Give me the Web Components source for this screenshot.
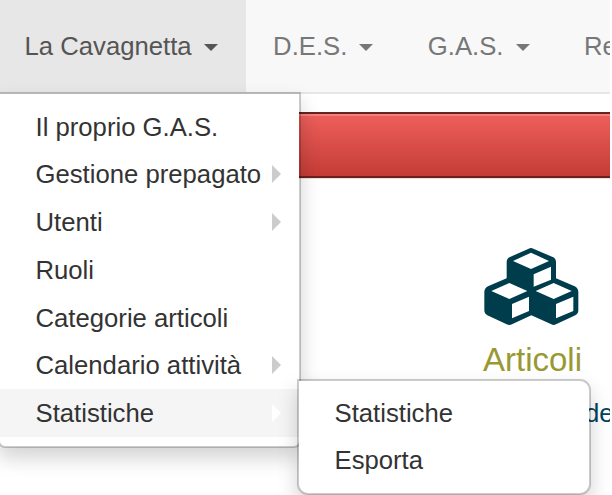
<!DOCTYPE html>
<html lang="it">
<head>
<meta charset="utf-8">
<title>La Cavagnetta</title>
<style>
html,body{margin:0;height:100%;overflow:hidden;background:#fff}
body{font:25.7px/47.75px "Liberation Sans",Arial,sans-serif;color:#333}
</style>
</head>
<body>
<app-page>
  <nav-bar slot="nav">
    <nav-item active caret>La Cavagnetta</nav-item>
    <nav-item caret>D.E.S.</nav-item>
    <nav-item caret>G.A.S.</nav-item>
    <nav-item>Re</nav-item>
  </nav-bar>
  <alert-bar></alert-bar>
  <feature-card heading="Articoli">de</feature-card>
  <drop-menu slot="menu">
    <menu-item>Il proprio G.A.S.</menu-item>
    <menu-item sub>Gestione prepagato</menu-item>
    <menu-item sub>Utenti</menu-item>
    <menu-item>Ruoli</menu-item>
    <menu-item>Categorie articoli</menu-item>
    <menu-item sub>Calendario attività</menu-item>
    <menu-item sub active>Statistiche</menu-item>
  </drop-menu>
  <drop-menu flyout slot="menu">
    <menu-item>Statistiche</menu-item>
    <menu-item>Esporta</menu-item>
  </drop-menu>
</app-page>
<script>
const define = (name, html) => customElements.define(name, class extends HTMLElement {
  constructor() {
    super();
    this.attachShadow({ mode: 'open' }).innerHTML = html;
    const h = this.shadowRoot.querySelector('h3');
    if (h) h.textContent = this.getAttribute('heading');
  }
});

define('app-page', `<style>
  :host{display:flex;flex-direction:column;position:relative;width:610px;height:495px;overflow:hidden}
</style><slot name="nav"></slot><slot></slot><slot name="menu"></slot>`);

define('nav-bar', `<style>
  :host{display:flex;flex:none;height:92px;background:#f8f8f8;border-bottom:2px solid #e7e7e7;overflow:hidden}
</style><slot></slot>`);

define('nav-item', `<style>
  :host{display:flex;flex:none;align-items:center;gap:12px;height:92px;padding:0 27.5px 0 27px;box-sizing:border-box;color:#777;white-space:nowrap}
  :host([active]){background:#e7e7e7;color:#555;padding-left:24.5px;padding-right:28.5px}
  span{padding-top:2px}
  i{display:none;border:7px solid transparent;border-top-color:currentColor;border-bottom:0;margin-top:3px}
  :host([caret]) i{display:block}
</style><span><slot></slot></span><i></i>`);

define('alert-bar', `<style>
  :host{display:block;flex:none;box-sizing:border-box;height:66px;margin-top:18px;
    border:solid #6b211e;border-width:2px 0;background:linear-gradient(#ee5f5b,#c43c35);
    box-shadow:inset 0 2px 0 rgba(255,255,255,.22),0 1px 0 #f0dcdb}
</style>`);

define('feature-card', `<style>
  :host{display:grid;margin:69px 0 0 483px;justify-items:start}
  svg{display:block;width:96px;height:79px}
  h3{margin:15px 0 0;font-size:33px;font-weight:400;line-height:38px;color:#993}
  p{margin:11px 0 0 102px;color:#00445c}
</style>
<svg viewBox="39 36 288 237" fill="#003d4c" fill-rule="evenodd"><path d="M176 41Q183 37 190 41L248 66Q258 70 258 82V130L314 154Q325 160 325 171V226Q325 236 316 241L258 268Q251 272 244 268L184 241L126 268Q118 272 110 268L52 241Q43 236 43 226V171Q43 160 54 154L110 130V82Q110 70 120 66Z
M183 53L237 78L183 102L129 78ZM191 118L243 95V134L191 155ZM118 144L172 168L118 192L64 168ZM126 207L177 185V228L126 250ZM251 144L305 168L251 192L197 168ZM258 207L310 185V228L258 250Z"/></svg>
<h3></h3><p><slot></slot></p>`);

define('drop-menu', `<style>
  :host{position:absolute;left:-2px;top:92px;width:303px;height:356px;box-sizing:border-box;padding:8.5px 0;
    display:flex;flex-direction:column;background:#fff;background-clip:padding-box;
    border:2px solid rgba(0,0,0,.2);border-radius:0 0 7px 7px;box-shadow:0 10px 20px rgba(0,0,0,.175)}
  :host([flyout]){left:297px;top:379px;width:294px;height:116px;padding-top:7.5px;border-radius:0 11px 11px 11px}
</style><slot></slot>`);

define('menu-item', `<style>
  :host{display:flex;flex:none;align-items:center;justify-content:space-between;height:47.75px;padding:0 18.5px 0 35.5px;white-space:nowrap}
  :host([active]){background:#f5f5f5}
  span{padding-top:2px}
  i{display:none;border:9px solid transparent;border-left-color:#ccc;border-right:0}
  :host([sub]) i{display:block}
  :host([active]) i{border-left-color:#fff}
</style><span><slot></slot></span><i></i>`);
</script>
</body>
</html>
